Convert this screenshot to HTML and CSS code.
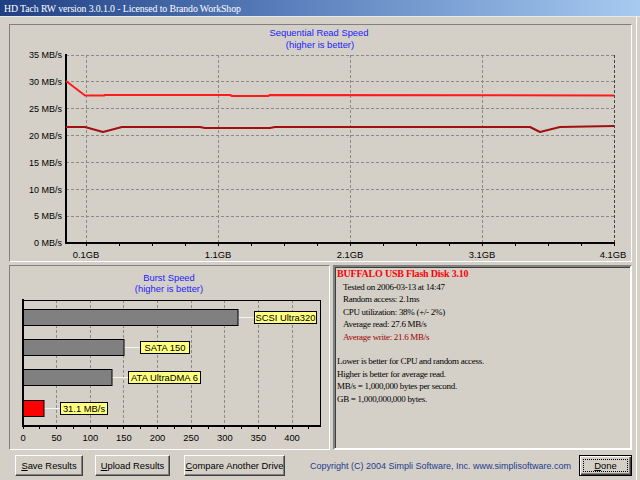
FILE: index.html
```html
<!DOCTYPE html>
<html>
<head>
<meta charset="utf-8">
<link rel="stylesheet" href="styles.css">
</head>
<body>
<div class="window">
  <div class="titlebar"><span class="title">HD Tach RW version 3.0.1.0 - Licensed to Brando WorkShop</span></div>
  <div class="client">
    <div class="panel chart-panel">
      <svg class="chart" width="621" height="236" viewBox="0 0 621 236">
        <g transform="translate(-10 -25)">
          <text class="ctitle" x="319" y="36">Sequential Read Speed</text>
          <text class="ctitle" x="320" y="48">(higher is better)</text>
          <g class="grid">
            <line x1="66" y1="55" x2="614" y2="55"/>
            <line x1="66" y1="81.9" x2="614" y2="81.9"/>
            <line x1="66" y1="108.7" x2="614" y2="108.7"/>
            <line x1="66" y1="135.6" x2="614" y2="135.6"/>
            <line x1="66" y1="162.4" x2="614" y2="162.4"/>
            <line x1="66" y1="189.3" x2="614" y2="189.3"/>
            <line x1="66" y1="216.1" x2="614" y2="216.1"/>
            <line x1="86" y1="55" x2="86" y2="243"/>
            <line x1="218" y1="55" x2="218" y2="243"/>
            <line x1="350" y1="55" x2="350" y2="243"/>
            <line x1="482" y1="55" x2="482" y2="243"/>
            <line class="edge" x1="614" y1="55" x2="614" y2="243"/>
          </g>
          <g class="ticks">
            <line x1="86" y1="243" x2="86" y2="246"/><line x1="119" y1="243" x2="119" y2="246"/><line x1="152" y1="243" x2="152" y2="246"/><line x1="185" y1="243" x2="185" y2="246"/>
            <line x1="218" y1="243" x2="218" y2="246"/><line x1="251" y1="243" x2="251" y2="246"/><line x1="284" y1="243" x2="284" y2="246"/><line x1="317" y1="243" x2="317" y2="246"/>
            <line x1="350" y1="243" x2="350" y2="246"/><line x1="383" y1="243" x2="383" y2="246"/><line x1="416" y1="243" x2="416" y2="246"/><line x1="449" y1="243" x2="449" y2="246"/>
            <line x1="482" y1="243" x2="482" y2="246"/><line x1="515" y1="243" x2="515" y2="246"/><line x1="548" y1="243" x2="548" y2="246"/><line x1="581" y1="243" x2="581" y2="246"/>
            <line x1="614" y1="243" x2="614" y2="246"/>
          </g>
          <line class="axis" x1="66" y1="54" x2="66" y2="244"/>
          <line class="axis" x1="65" y1="243" x2="615" y2="243"/>
          <g class="ylab">
            <text x="62" y="58">35 MB/s</text>
            <text x="62" y="85">30 MB/s</text>
            <text x="62" y="112">25 MB/s</text>
            <text x="62" y="139">20 MB/s</text>
            <text x="62" y="166">15 MB/s</text>
            <text x="62" y="193">10 MB/s</text>
            <text x="62" y="219">5 MB/s</text>
            <text x="62" y="246">0 MB/s</text>
          </g>
          <g class="xlab">
            <text x="86" y="258">0.1GB</text>
            <text x="218" y="258">1.1GB</text>
            <text x="350" y="258">2.1GB</text>
            <text x="482" y="258">3.1GB</text>
            <text x="613" y="258">4.1GB</text>
          </g>
          <polyline class="read" points="66,81 85,95.5 104,95.5 105,95 230,95 232,96 268,96 270,95 614,95.5"/>
          <polyline class="write" points="66,127 85,127 103,132 122,127 200,127 205,128 270,128 275,127 530,127 540,132 560,127 614,126"/>
        </g>
      </svg>
    </div>
    <div class="row">
      <div class="panel burst-panel">
        <svg class="chart" width="319" height="183" viewBox="0 0 319 183">
          <g transform="translate(-10 -266)">
            <text class="ctitle" x="169" y="281">Burst Speed</text>
            <text class="ctitle" x="169" y="292">(higher is better)</text>
            <g class="grid">
              <line x1="56.6" y1="300" x2="56.6" y2="426"/>
              <line x1="90.3" y1="300" x2="90.3" y2="426"/>
              <line x1="123.9" y1="300" x2="123.9" y2="426"/>
              <line x1="157.5" y1="300" x2="157.5" y2="426"/>
              <line x1="191.1" y1="300" x2="191.1" y2="426"/>
              <line x1="224.8" y1="300" x2="224.8" y2="426"/>
              <line x1="258.4" y1="300" x2="258.4" y2="426"/>
              <line x1="292" y1="300" x2="292" y2="426"/>
            </g>
            <rect class="frame" x="23" y="300" width="297" height="126"/>
            <g class="ticks">
              <line x1="23" y1="426" x2="23" y2="429"/><line x1="39.8" y1="426" x2="39.8" y2="429"/><line x1="56.6" y1="426" x2="56.6" y2="429"/><line x1="73.4" y1="426" x2="73.4" y2="429"/>
              <line x1="90.3" y1="426" x2="90.3" y2="429"/><line x1="107.1" y1="426" x2="107.1" y2="429"/><line x1="123.9" y1="426" x2="123.9" y2="429"/><line x1="140.7" y1="426" x2="140.7" y2="429"/>
              <line x1="157.5" y1="426" x2="157.5" y2="429"/><line x1="174.3" y1="426" x2="174.3" y2="429"/><line x1="191.1" y1="426" x2="191.1" y2="429"/><line x1="208" y1="426" x2="208" y2="429"/>
              <line x1="224.8" y1="426" x2="224.8" y2="429"/><line x1="241.6" y1="426" x2="241.6" y2="429"/><line x1="258.4" y1="426" x2="258.4" y2="429"/><line x1="275.2" y1="426" x2="275.2" y2="429"/>
              <line x1="292" y1="426" x2="292" y2="429"/><line x1="308.8" y1="426" x2="308.8" y2="429"/>
            </g>
            <line class="axis" x1="23" y1="299" x2="23" y2="427"/>
            <line class="axis" x1="22" y1="426" x2="321" y2="426"/>
            <g class="xlab">
              <text x="23" y="441">0</text>
              <text x="56.6" y="441">50</text>
              <text x="90.3" y="441">100</text>
              <text x="123.9" y="441">150</text>
              <text x="157.5" y="441">200</text>
              <text x="191.1" y="441">250</text>
              <text x="224.8" y="441">300</text>
              <text x="258.4" y="441">350</text>
              <text x="292" y="441">400</text>
            </g>
            <line class="conn" x1="238" y1="317.5" x2="254" y2="317.5"/>
            <line class="conn" x1="124" y1="347.5" x2="140" y2="347.5"/>
            <line class="conn" x1="112" y1="377.5" x2="128" y2="377.5"/>
            <line class="conn" x1="44" y1="408.5" x2="60" y2="408.5"/>
            <rect class="bar" x="23.5" y="309.5" width="214.5" height="16"/>
            <rect class="bar" x="23.5" y="339.5" width="100.5" height="16"/>
            <rect class="bar" x="23.5" y="369.5" width="88.5" height="16"/>
            <rect class="bar mine" x="23.5" y="400.5" width="20.5" height="16"/>
            <rect class="tag" x="254.5" y="311.5" width="62" height="12"/>
            <text class="tagtext" x="285.5" y="321">SCSI Ultra320</text>
            <rect class="tag" x="140.5" y="341.5" width="49" height="12"/>
            <text class="tagtext" x="165" y="351">SATA 150</text>
            <rect class="tag" x="128.5" y="371.5" width="72" height="12"/>
            <text class="tagtext" x="164.5" y="381">ATA UltraDMA 6</text>
            <rect class="tag" x="60.5" y="402.5" width="47" height="12"/>
            <text class="tagtext" x="84" y="412">31.1 MB/s</text>
          </g>
        </svg>
      </div>
      <div class="info">
        <div class="drive">BUFFALO USB Flash Disk 3.10</div>
        <div class="stat">Tested on 2006-03-13 at 14:47</div>
        <div class="stat">Random access: 2.1ms</div>
        <div class="stat">CPU utilization: 38% (+/- 2%)</div>
        <div class="stat">Average read: 27.6 MB/s</div>
        <div class="stat write-stat">Average write: 21.6 MB/s</div>
        <div class="notes">
          <div>Lower is better for CPU and random access.</div>
          <div>Higher is better for average read.</div>
          <div>MB/s = 1,000,000 bytes per second.</div>
          <div>GB = 1,000,000,000 bytes.</div>
        </div>
      </div>
    </div>
    <div class="footer">
      <button class="btn btn-save"><u>S</u>ave Results</button>
      <button class="btn btn-upload"><u>U</u>pload Results</button>
      <button class="btn btn-compare"><u>C</u>ompare Another Drive</button>
      <span class="copyright">Copyright (C) 2004 Simpli Software, Inc. www.simplisoftware.com</span>
      <button class="btn btn-done"><span class="focus"><u>D</u>one</span></button>
    </div>
  </div>
</div>
</body>
</html>
```

FILE: styles.css
```css
* { box-sizing: border-box; }
html, body { margin: 0; padding: 0; }
body { width: 640px; height: 480px; overflow: hidden; background: #d4d0c8; }

.window {
  width: 640px;
  height: 480px;
  display: flex;
  flex-direction: column;
  background: #d4d0c8;
}

.titlebar {
  height: 17px;
  background: linear-gradient(to right, #1f3f82 0%, #5a7fbc 45%, #a6caf0 100%);
  border-bottom: 1px solid #e8e8e8;
  display: flex;
  align-items: center;
  padding-left: 4px;
}
.title {
  color: #ffffff;
  font-family: "Liberation Serif", serif;
  font-size: 9.8px;
  letter-spacing: -0.1px;
  white-space: nowrap;
}

.client {
  flex: 1;
  display: flex;
  flex-direction: column;
  padding: 7px 4px 0 9px;
  border-right: 1px solid #ffffff;
  margin-right: 3px;
}

.panel {
  border: 1px solid;
  border-color: #808080 #ffffff #ffffff #808080;
}

.chart-panel { height: 238px; }
.chart { display: block; }

.row {
  display: flex;
  margin-top: 3px;
  height: 185px;
}
.burst-panel { width: 321px; height: 185px; }

.info {
  margin-left: 3px;
  width: 299px;
  height: 185px;
  border: 2px solid;
  border-color: #808080 #ffffff #ffffff #808080;
  box-shadow: inset 1px 1px 0 #404040;
  padding: 1px 0 0 2px;
  font-family: "Liberation Serif", serif;
  font-size: 9px;
  letter-spacing: -0.3px;
  line-height: 12.5px;
  color: #000;
}
.drive { color: #ff0000; font-weight: bold; font-size: 10px; letter-spacing: -0.2px; }
.stat { padding-left: 6px; }
.write-stat { color: #a00000; }
.notes { margin-top: 12px; }

.ctitle {
  fill: #2020ff;
  font-family: "Liberation Sans", sans-serif;
  font-size: 9.4px;
  text-anchor: middle;
}
.grid line {
  stroke: #8a8a8a;
  stroke-width: 1;
  stroke-dasharray: 3 2;
  shape-rendering: crispEdges;
}
.grid .edge { stroke: #404040; }
.ticks line { stroke: #000; stroke-width: 1; shape-rendering: crispEdges; }
.axis { stroke: #000; stroke-width: 2; shape-rendering: crispEdges; }
.frame { fill: none; stroke: #000; stroke-width: 1; shape-rendering: crispEdges; }
.ylab text {
  font-family: "Liberation Sans", sans-serif;
  font-size: 9px;
  text-anchor: end;
  fill: #000;
}
.xlab text {
  font-family: "Liberation Sans", sans-serif;
  font-size: 9.4px;
  text-anchor: middle;
  fill: #000;
}
.read { fill: none; stroke: #ff1a1a; stroke-width: 2; stroke-linejoin: round; }
.write { fill: none; stroke: #a01010; stroke-width: 2; stroke-linejoin: round; }

.conn { stroke: #f4f4f4; stroke-width: 1; shape-rendering: crispEdges; }
.bar { fill: #808080; stroke: #000; stroke-width: 1; }
.bar.mine { fill: #ff0000; }
.tag { fill: #ffff80; stroke: #000; stroke-width: 1; }
.tagtext {
  font-family: "Liberation Sans", sans-serif;
  font-size: 9.4px;
  text-anchor: middle;
  fill: #000;
}

.footer {
  display: flex;
  align-items: center;
  margin-top: 5px;
  height: 21px;
  padding-left: 6px;
}
.btn {
  height: 21px;
  padding: 0;
  background: #d4d0c8;
  border: 1px solid;
  border-color: #ffffff #404040 #404040 #ffffff;
  box-shadow: inset -1px -1px 0 #808080;
  font-family: "Liberation Sans", sans-serif;
  font-size: 9.4px;
  color: #000;
  display: flex;
  align-items: center;
  justify-content: center;
}
.btn-save { width: 68px; }
.btn-upload { width: 75px; margin-left: 12px; }
.btn-compare { width: 101px; margin-left: 14px; }
.copyright {
  margin-left: 25px;
  font-family: "Liberation Sans", sans-serif;
  font-size: 9px;
  color: #1e3a8c;
  white-space: nowrap;
}
.btn-done {
  width: 53px;
  margin-left: auto;
  margin-right: 0;
  border: 1px solid #000;
  box-shadow: inset 1px 1px 0 #ffffff, inset -1px -1px 0 #404040, inset -2px -2px 0 #808080;
  padding: 3px;
}
.focus {
  display: flex;
  align-items: center;
  justify-content: center;
  width: 100%;
  height: 100%;
  border: 1px dotted #000;
}
```
